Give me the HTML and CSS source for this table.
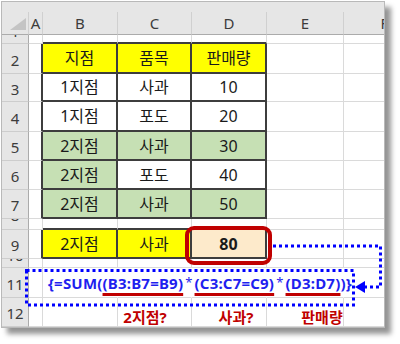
FILE: index.html
```html
<!DOCTYPE html>
<html lang="ko">
<head>
<meta charset="utf-8">
<link rel="stylesheet" href="styles.css">
</head>
<body>
<div class="canvas">
  <div class="sheet">
    <div class="strip"></div>

    <div class="corner"><svg width="26" height="22" viewBox="0 0 26 22"><polygon points="24,6 24,18 8,18" fill="#c4c4c4"/></svg></div>
    <div class="ch">A</div><div class="ch">B</div><div class="ch">C</div><div class="ch">D</div><div class="ch">E</div><div class="ch">F</div>

    <div class="rh clip"><span>1</span></div>
    <div class="c"></div><div class="c tb"></div><div class="c tb"></div><div class="c tb"></div><div class="c"></div><div class="c"></div>

    <div class="rh"><span>2</span></div>
    <div class="c tl"></div><div class="c t yellow">지점</div><div class="c t yellow">품목</div><div class="c t yellow">판매량</div><div class="c"></div><div class="c"></div>

    <div class="rh"><span>3</span></div>
    <div class="c tl"></div><div class="c t">1지점</div><div class="c t">사과</div><div class="c t">10</div><div class="c"></div><div class="c"></div>

    <div class="rh"><span>4</span></div>
    <div class="c tl"></div><div class="c t">1지점</div><div class="c t">포도</div><div class="c t">20</div><div class="c"></div><div class="c"></div>

    <div class="rh"><span>5</span></div>
    <div class="c tl"></div><div class="c t green">2지점</div><div class="c t green">사과</div><div class="c t green">30</div><div class="c"></div><div class="c"></div>

    <div class="rh"><span>6</span></div>
    <div class="c tl"></div><div class="c t green">2지점</div><div class="c t">포도</div><div class="c t">40</div><div class="c"></div><div class="c"></div>

    <div class="rh"><span>7</span></div>
    <div class="c tl"></div><div class="c t green">2지점</div><div class="c t green">사과</div><div class="c t green">50</div><div class="c"></div><div class="c"></div>

    <div class="rh clip"><span>8</span></div>
    <div class="c"></div><div class="c tb"></div><div class="c tb"></div><div class="c tb"></div><div class="c"></div><div class="c"></div>

    <div class="rh"><span>9</span></div>
    <div class="c tl"></div><div class="c t yellow">2지점</div><div class="c t yellow">사과</div><div class="c t peach bold">80</div><div class="c"></div><div class="c"></div>

    <div class="rh clip"><span>10</span></div>
    <div class="c"></div><div class="c"></div><div class="c"></div><div class="c"></div><div class="c"></div><div class="c"></div>

    <div class="rh"><span>11</span></div>
    <div class="c"></div>
    <div class="c formula-cell nr"><span class="formula">{=SUM(<span class="ul">(B3:B7=B9)</span><span class="star">*</span><span class="ul">(C3:C7=C9)</span><span class="star">*</span><span class="ul">(D3:D7)</span>)}</span></div>
    <div class="c nr"></div><div class="c nr"></div><div class="c nr"></div><div class="c"></div>

    <div class="rh"><span>12</span></div>
    <div class="c"></div><div class="c"></div><div class="c"></div><div class="c"></div><div class="c"></div><div class="c"></div>
  </div>

  <span class="label l1">2지점?</span>
  <span class="label l2">사과?</span>
  <span class="label l3">판매량</span>

  <svg class="overlay" width="400" height="344" viewBox="0 0 400 344">
    <rect x="187" y="227" width="83" height="35" rx="7" ry="7" fill="none" stroke="#c00000" stroke-width="4"/>
    <rect x="26.5" y="269.5" width="327" height="34.5" fill="none" stroke="#0000ff" stroke-width="3" stroke-dasharray="3 3"/>
    <polyline points="273,245 380.5,245 380.5,286 364,286" fill="none" stroke="#0000ff" stroke-width="3" stroke-dasharray="3 3"/>
    <polygon points="355,286 365,280 365,292" fill="#0000ff"/>
  </svg>
</div>
</body>
</html>
```

FILE: styles.css
```css
html, body {
  margin: 0;
  padding: 0;
  background: #ffffff;
}

body {
  width: 400px;
  height: 344px;
  overflow: hidden;
  font-family: "Noto Sans", "Noto Sans CJK KR", sans-serif;
  color: #1a1a1a;
}

.canvas {
  position: relative;
  width: 400px;
  height: 344px;
}

.sheet {
  display: grid;
  grid-template-columns: 27px 14px 75px 74px 75px 77px 82px;
  grid-template-rows: 10px 23px 9px 30px 28px 30px 29px 29px 29px 11px 29px 9px 30px 29px;
  width: 382px;
  height: 325px;
  margin: 1px 0 0 1px;
  border: 1px solid #b9b9b9;
  overflow: hidden;
  background: #ffffff;
  box-shadow: 6px 6px 5px rgba(0, 0, 0, 0.42);
}

.strip {
  grid-column: 1 / -1;
  background: #e6e6e6;
}

.corner,
.ch {
  background: #e6e6e6;
  border-right: 1px solid #d0d0d0;
  border-bottom: 1px solid #ababab;
}

.corner svg {
  display: block;
}

.ch {
  display: flex;
  align-items: flex-end;
  justify-content: center;
  padding-bottom: 1px;
  font-size: 15px;
  line-height: 20px;
  color: #3c3c3c;
}

.rh {
  background: #e6e6e6;
  border-right: 1px solid #ababab;
  border-bottom: 1px solid #cdcdcd;
  display: flex;
  align-items: center;
  justify-content: center;
  padding-top: 2px;
  font-size: 15px;
  line-height: 20px;
  color: #3c3c3c;
  overflow: hidden;
}

.rh.clip {
  align-items: flex-start;
  padding-top: 0;
}

.rh.clip span {
  margin-top: -14px;
}

.c {
  border-right: 1px solid #dadada;
  border-bottom: 1px solid #dadada;
  display: flex;
  align-items: center;
  justify-content: center;
  font-size: 16px;
  line-height: 20px;
  overflow: hidden;
}

.c.nr {
  border-right-color: transparent;
}

.c.t {
  border-right: 2px solid #3d3d3d;
  border-bottom: 2px solid #3d3d3d;
}

.c.tb {
  border-bottom: 2px solid #3d3d3d;
}

.c.tl {
  border-right: 2px solid #3d3d3d;
}

.yellow {
  background: #ffff00;
}

.green {
  background: #c6e0b4;
}

.peach {
  background: #fdeacb;
}

.bold {
  font-weight: 700;
}

.formula-cell {
  position: relative;
  z-index: 1;
  overflow: visible;
  justify-content: flex-start;
  padding-left: 5px;
  padding-bottom: 1px;
}

.formula {
  white-space: nowrap;
  font-size: 15px;
  font-weight: 700;
  color: #1f1fef;
  letter-spacing: 0.2px;
}

.ul {
  text-decoration: underline;
  text-decoration-color: #c00000;
  text-decoration-thickness: 3px;
  text-underline-offset: 4px;
}

.star {
  font-weight: 400;
  font-size: 13px;
  vertical-align: 2px;
  padding: 0 2px;
}

.label {
  position: absolute;
  top: 306px;
  transform: translateX(-50%);
  font-size: 15px;
  font-weight: 700;
  line-height: 20px;
  color: #c00000;
  white-space: nowrap;
}

.l1 { left: 145px; }
.l2 { left: 236px; }
.l3 { left: 322px; }

.overlay {
  position: absolute;
  left: 0;
  top: 0;
  pointer-events: none;
}
```
